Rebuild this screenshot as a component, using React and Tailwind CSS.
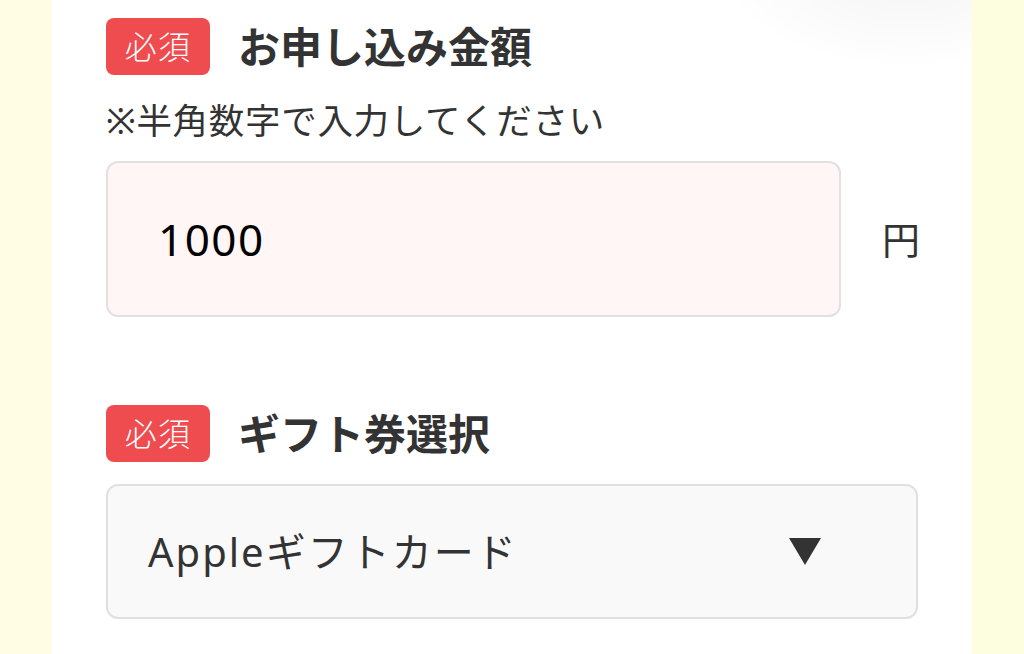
import React from 'react';

const font = { fontFamily: '"Noto Sans", "Noto Sans CJK JP", sans-serif' };

const RequiredBadge = () => (
  <span className="flex h-[57px] w-[104px] items-center justify-center rounded-[8px] bg-[#ef4c50] text-[32px] font-light tracking-[0.04em] text-white">
    必須
  </span>
);

const SectionHeader = ({ title }) => (
  <div className="flex items-center gap-[28px]">
    <RequiredBadge />
    <h2 className="text-[42px] font-bold leading-none text-[#333]">{title}</h2>
  </div>
);

export default function App() {
  return (
    <div className="flex min-h-[654px] bg-[#fffee4]" style={font}>
      <div className="w-[52px] shrink-0" />
      <main className="relative w-[920px] shrink-0 overflow-hidden bg-white px-[54px] pt-[18px]">
        {/* faint shadow from the header above */}
        <div className="pointer-events-none absolute right-0 top-0 h-[70px] w-[260px] bg-[radial-gradient(ellipse_at_75%_-60%,rgba(0,0,0,0.05),rgba(0,0,0,0)_70%)]" />

        {/* amount */}
        <section>
          <SectionHeader title="お申し込み金額" />
          <p className="mt-[23px] text-[35.5px] leading-[44px] tracking-[0.7px] text-[#333]">※半角数字で入力してください</p>
          <div className="mt-[19px] flex items-center">
            <div className="flex h-[156px] w-[735px] items-center rounded-[12px] border-2 border-[#e2e0e0] bg-[#fff6f5] pl-[50px]">
              <span className="text-[44px] tracking-[1.5px] text-black">1000</span>
            </div>
            <span className="ml-auto mr-[-2px] text-[38px] text-[#333]">円</span>
          </div>
        </section>

        {/* gift card */}
        <section className="mt-[88px]">
          <SectionHeader title="ギフト券選択" />
          <div className="mt-[22px] flex h-[135px] items-center justify-between rounded-[12px] border-2 border-[#e0e0e0] bg-[#f9f9f9] pl-[40px] pr-[95px]">
            <span className="text-[40px] tracking-[2px] text-[#333]">Appleギフトカード</span>
            <svg width="32" height="27" viewBox="0 0 32 27">
              <polygon points="0,0 32,0 16,27" fill="#333" />
            </svg>
          </div>
        </section>
      </main>
      <div className="flex-1 bg-[#fdfddf]" />
    </div>
  );
}
